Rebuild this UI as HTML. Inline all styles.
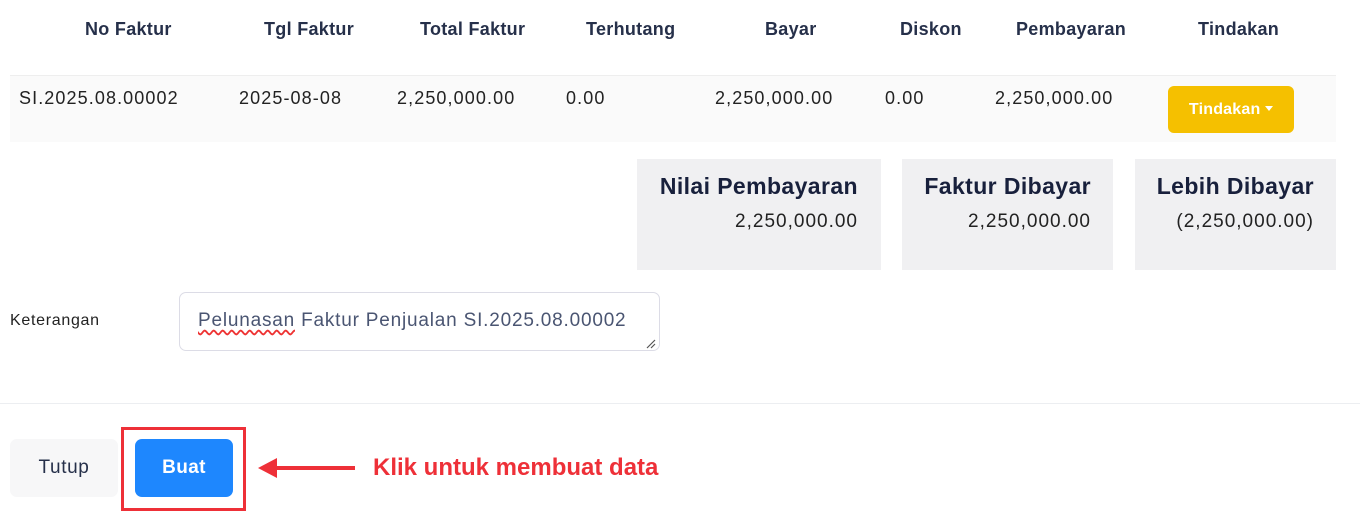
<!DOCTYPE html>
<html><head><meta charset="utf-8"><style>
body{margin:0;width:1360px;height:525px;background:#fff;position:relative;overflow:hidden;font-family:"Liberation Sans",sans-serif;}
.a{position:absolute;white-space:nowrap;}
.h{font-weight:bold;font-size:18px;letter-spacing:0.3px;color:#26304a;top:19px;}
.v{font-size:18px;letter-spacing:1.1px;color:#222;top:88px;}
.box{position:absolute;background:#f0f0f2;top:159px;height:111px;}
.bt{position:absolute;right:23px;top:14px;font-weight:bold;font-size:23px;letter-spacing:0.4px;color:#18203c;}
.bv{position:absolute;right:23px;top:52px;font-size:19px;letter-spacing:1px;color:#222;}
</style></head><body>
<div class="a h" style="left:85px">No Faktur</div>
<div class="a h" style="left:264px">Tgl Faktur</div>
<div class="a h" style="left:420px">Total Faktur</div>
<div class="a h" style="left:586px">Terhutang</div>
<div class="a h" style="left:765px">Bayar</div>
<div class="a h" style="left:900px">Diskon</div>
<div class="a h" style="left:1016px">Pembayaran</div>
<div class="a h" style="left:1198px">Tindakan</div>

<div class="a" style="left:10px;top:75px;width:1326px;height:66px;background:#fafafa;border-top:1px solid #eee;"></div>
<div class="a v" style="left:19px">SI.2025.08.00002</div>
<div class="a v" style="left:239px">2025-08-08</div>
<div class="a v" style="left:397px">2,250,000.00</div>
<div class="a v" style="left:566px">0.00</div>
<div class="a v" style="left:715px">2,250,000.00</div>
<div class="a v" style="left:885px">0.00</div>
<div class="a v" style="left:995px">2,250,000.00</div>
<div class="a" style="left:1168px;top:86px;width:126px;height:47px;background:#f5c000;border-radius:6px;color:#fff;font-weight:bold;font-size:16px;letter-spacing:0.2px;line-height:47px;text-align:center;">Tindakan <span style="display:inline-block;width:0;height:0;border-left:4px solid transparent;border-right:4px solid transparent;border-top:5px solid #fff;vertical-align:middle;margin-top:-2px;"></span></div>

<div class="box" style="left:637px;width:244px"><div class="bt">Nilai Pembayaran</div><div class="bv">2,250,000.00</div></div>
<div class="box" style="left:902px;width:211px"><div class="bt" style="right:22px">Faktur Dibayar</div><div class="bv" style="right:22px">2,250,000.00</div></div>
<div class="box" style="left:1135px;width:201px"><div class="bt" style="right:22px">Lebih Dibayar</div><div class="bv" style="right:22px">(2,250,000.00)</div></div>

<div class="a" style="left:10px;top:312px;font-size:16px;letter-spacing:0.7px;color:#222;">Keterangan</div>
<div class="a" style="left:179px;top:292px;width:479px;height:57px;border:1px solid #dcdce6;border-radius:7px;"></div>
<div class="a" style="left:198px;top:310px;font-size:19px;letter-spacing:0.8px;color:#4a5572;"><span style="text-decoration:underline wavy #e33;text-underline-offset:3px;">Pelunasan</span> Faktur Penjualan SI.2025.08.00002</div>
<svg class="a" style="left:645px;top:338px" width="12" height="12"><path d="M2 10L10 2M6 10L10 6" stroke="#555" stroke-width="1.2"/></svg>

<div class="a" style="left:0;top:403px;width:1360px;height:1px;background:#eceef1;"></div>

<div class="a" style="left:10px;top:439px;width:108px;height:58px;background:#f7f7f8;border-radius:7px;font-size:19px;letter-spacing:0.6px;color:#26304a;line-height:58px;text-align:center;">Tutup</div>
<div class="a" style="left:121px;top:427px;width:119px;height:78px;border:3px solid #ee3038;"></div>
<div class="a" style="left:135px;top:439px;width:98px;height:58px;background:#1e87fe;border-radius:7px;font-size:19px;letter-spacing:0.4px;font-weight:bold;color:#fff;line-height:58px;text-align:center;">Buat</div>
<svg class="a" style="left:255px;top:455px" width="105" height="28"><path d="M20 13H100" stroke="#ee3038" stroke-width="4"/><path d="M3 13L22 3V23Z" fill="#ee3038"/></svg>
<div class="a" style="left:373px;top:454px;font-size:24px;font-weight:bold;color:#ee3038;">Klik untuk membuat data</div>
</body></html>
